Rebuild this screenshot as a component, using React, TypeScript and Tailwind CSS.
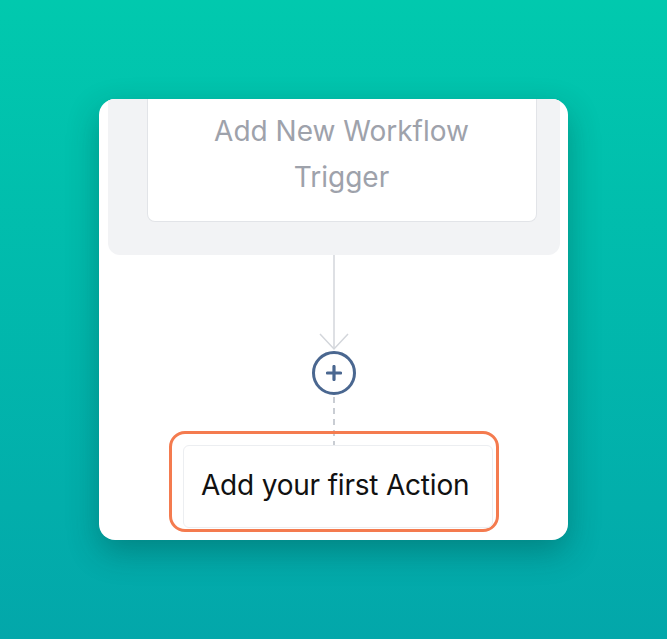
import React from "react";

function Connector() {
	return (
		<svg width="40" height="96" viewBox="0 0 40 96" className="block">
			<line x1="20" y1="0" x2="20" y2="94" stroke="#d3d6db" strokeWidth="1.5" />
			<polyline points="6,79 20,94 34,79" fill="none" stroke="#d3d6db" strokeWidth="1.5" />
		</svg>
	);
}

export default function App() {
	return (
		<div className="h-[639px] w-full overflow-hidden bg-linear-to-b from-[#01c9ae] to-[#03a7aa] pl-[99px] pt-[99px] font-['Inter','Liberation_Sans',sans-serif]">
			<div className="flex h-[441px] w-[469px] flex-col items-center overflow-hidden rounded-[16px] bg-white shadow-[0_12px_32px_rgba(0,40,40,0.3)]">
				{/* Trigger panel, clipped at the top */}
				<div className="flex h-[156px] w-[452px] rounded-b-[12px] bg-[#f2f3f5] pl-[39px]">
					<div className="h-[123px] w-[390px] rounded-b-[8px] border border-t-0 border-[#e2e4e8] bg-white pt-[9px] text-center text-[28px] leading-[46px] text-[#9ea2ab]">
						Add New Workflow
						<br />
						Trigger
					</div>
				</div>

				<Connector />

				{/* Add step button */}
				<div className="flex h-[44px] w-[44px] items-center justify-center rounded-full border-[3px] border-[#4a6790]">
					<svg width="16" height="16" viewBox="0 0 16 16">
						<path d="M8 1.5v13M1.5 8h13" stroke="#4a6790" strokeWidth="3.2" strokeLinecap="round" />
					</svg>
				</div>

				<div className="mt-[2px] h-[50px] border-l-2 border-dashed border-[#c9cdd3] -mb-[16px]" />

				{/* Highlighted first action */}
				<div className="ml-[1px] h-[101px] w-[330px] rounded-[16px] border-[3px] border-[#f47b4f] pb-[1px] pl-[11px] pr-[3px] pt-[11px]">
					<div className="h-[83px] whitespace-nowrap rounded-[6px] border border-[#eceef1] bg-white pl-[17px] pt-[19px] text-[28px] leading-[40px] tracking-[-0.2px] text-[#111]">
						Add your first Action
					</div>
				</div>
			</div>
		</div>
	);
}
